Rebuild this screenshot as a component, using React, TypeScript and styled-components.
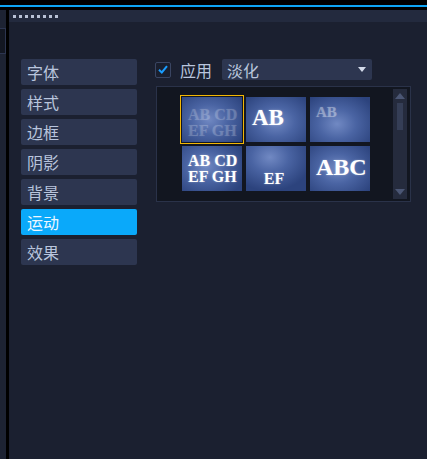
import React, { useState } from 'react'
import styled, { createGlobalStyle, css } from 'styled-components'

const GlobalStyle = createGlobalStyle`
    html, body {
        margin: 0;
        padding: 0;
        background: #000;
    }
    #root {
        width: 427px;
        height: 459px;
        overflow: hidden;
    }
`

const cjk = `"Noto Sans CJK SC", "Noto Sans", sans-serif`

const Window = styled.div`
    display: flex;
    flex-direction: column;
    width: 427px;
    height: 459px;
    background: #000;
`

const TopLine = styled.div`
    height: 2px;
    margin: 5px 0 3px;
    background: #0ea5f5;
`

const Body = styled.div`
    flex: 1;
    display: flex;
    gap: 3px;
    min-height: 0;
`

const SideStrip = styled.div`
    width: 6px;
    background: #1d2333;
    padding-top: 18px;
`

const SideBox = styled.div`
    height: 24px;
    background: #131722;
    border: 1px solid #2c3550;
    border-left: none;
`

const Main = styled.div`
    flex: 1;
    display: flex;
    flex-direction: column;
    background: #1b2030;
`

const Header = styled.div`
    height: 12px;
    display: flex;
    align-items: flex-start;
    gap: 3px;
    padding: 5px 0 0 4px;
    box-sizing: border-box;
    background: #232a3e;
`

const Dot = styled.span`
    width: 3px;
    height: 3px;
    background: #b9c2d6;
`

const Content = styled.div`
    display: flex;
    gap: 18px;
    padding: 37px 0 0 12px;
`

const Tabs = styled.div`
    display: flex;
    flex-direction: column;
    gap: 4px;
    width: 116px;
`

const Tab = styled.div<{ $active?: boolean }>`
    height: 26px;
    display: flex;
    align-items: center;
    padding-left: 6px;
    border-radius: 2px;
    font-family: ${cjk};
    font-size: 16px;
    color: #b9c5dd;
    background: #2d3650;
    cursor: pointer;
    ${p =>
        p.$active &&
        css`
            background: #0aa9fa;
            color: #eef7ff;
        `}
`

const Settings = styled.div`
    display: flex;
    flex-direction: column;
    gap: 6px;
`

const OptionRow = styled.div`
    display: flex;
    align-items: center;
    height: 21px;
`

const CheckBox = styled.div`
    width: 16px;
    height: 16px;
    box-sizing: border-box;
    border: 1px solid #3a4562;
    border-radius: 2px;
    background: #1a1f2e;
    display: flex;
    align-items: center;
    justify-content: center;
`

const Label = styled.span`
    margin: 0 10px 0 9px;
    font-family: ${cjk};
    font-size: 16px;
    color: #b9c5dd;
`

const Select = styled.div`
    width: 150px;
    height: 21px;
    display: flex;
    align-items: center;
    justify-content: space-between;
    padding: 0 6px 0 5px;
    box-sizing: border-box;
    border-radius: 2px;
    background: #2d3650;
    font-family: ${cjk};
    font-size: 16px;
    color: #b9c5dd;
`

const Arrow = styled.span`
    width: 0;
    height: 0;
    border-left: 4px solid transparent;
    border-right: 4px solid transparent;
    border-top: 5px solid #d3dbea;
`

const Gallery = styled.div`
    margin-left: 1px;
    width: 255px;
    height: 116px;
    box-sizing: border-box;
    display: flex;
    justify-content: space-between;
    padding: 2px 3px 2px 25px;
    border: 1px solid #2a3249;
    background: #121620;
`

const Grid = styled.div`
    display: grid;
    grid-template-columns: repeat(3, 60px);
    grid-auto-rows: 45px;
    gap: 4px;
    padding-top: 8px;
`

const Thumb = styled.div<{ $selected?: boolean; $light?: string }>`
    position: relative;
    overflow: hidden;
    box-sizing: border-box;
    background: radial-gradient(
        ellipse 70% 75% at ${p => p.$light ?? '45% 45%'},
        #7189c3 0%,
        #4a64a3 45%,
        #2c437d 100%
    );
    font-family: "Liberation Serif", "Times New Roman", serif;
    font-weight: bold;
    color: #fff;
    ${p =>
        p.$selected &&
        css`
            outline: 1px solid #f2b705;
            outline-offset: 1px;
        `}
`

const ThumbText = styled.div<{ $size: number; $fade?: number; $align?: string; $top: number; $left?: number }>`
    position: absolute;
    top: ${p => p.$top}px;
    left: ${p => (p.$left !== undefined ? `${p.$left}px` : '0')};
    right: ${p => (p.$left !== undefined ? 'auto' : '0')};
    text-align: ${p => p.$align ?? 'left'};
    font-size: ${p => p.$size}px;
    line-height: 16px;
    white-space: pre;
    opacity: ${p => p.$fade ?? 1};
    text-shadow: 0 0 2px rgba(255, 255, 255, 0.4);
`

const ScrollBar = styled.div`
    width: 14px;
    display: flex;
    flex-direction: column;
    align-items: center;
    justify-content: space-between;
    padding: 4px 0;
    box-sizing: border-box;
    background: #252b3d;
`

const ScrollArrow = styled.span<{ $down?: boolean }>`
    width: 0;
    height: 0;
    border-left: 5px solid transparent;
    border-right: 5px solid transparent;
    ${p =>
        p.$down
            ? css`border-top: 6px solid #4b5674;`
            : css`border-bottom: 6px solid #4b5674;`}
`

const ScrollThumb = styled.div`
    width: 6px;
    height: 27px;
    margin-top: 4px;
    background: #353e56;
`

const ScrollSpacer = styled.div`
    flex: 1;
    display: flex;
    flex-direction: column;
    align-items: center;
`

const tabs = ['字体', '样式', '边框', '阴影', '背景', '运动', '效果']

export default function App() {
    const [active, setActive] = useState(5)
    const [selected, setSelected] = useState(0)

    const thumbs = [
        <ThumbText $size={16} $fade={0.22} $top={10} $left={6}>{'AB CD\nEF GH'}</ThumbText>,
        <ThumbText $size={23} $top={9} $left={6} style={{ lineHeight: '24px' }}>AB</ThumbText>,
        <ThumbText $size={15} $fade={0.4} $top={7} $left={6}>AB</ThumbText>,
        <ThumbText $size={16} $top={7} $left={6}>{'AB CD\nEF GH'}</ThumbText>,
        <ThumbText $size={16} $top={25} $align="center" style={{ paddingRight: 4 }}>EF</ThumbText>,
        <ThumbText $size={24} $top={8} $left={6} style={{ lineHeight: '26px' }}>ABC</ThumbText>,
    ]
    const lights = ['45% 50%', '50% 55%', '45% 60%', '40% 45%', '40% 25%', '45% 50%']

    return (
        <>
            <GlobalStyle />
            <Window>
                <TopLine />
                <Body>
                    <SideStrip>
                        <SideBox />
                    </SideStrip>
                    <Main>
                        <Header>
                            {Array.from({ length: 8 }).map((_, i) => (
                                <Dot key={i} />
                            ))}
                        </Header>
                        <Content>
                            <Tabs>
                                {tabs.map((t, i) => (
                                    <Tab key={t} $active={i === active} onClick={() => setActive(i)}>
                                        {t}
                                    </Tab>
                                ))}
                            </Tabs>
                            <Settings>
                                <OptionRow>
                                    <CheckBox>
                                        <svg width="10" height="9" viewBox="0 0 10 9">
                                            <path d="M1 4.8 L3.8 7.5 L9 1.2" fill="none" stroke="#1a9dff" strokeWidth="2" />
                                        </svg>
                                    </CheckBox>
                                    <Label>应用</Label>
                                    <Select>
                                        淡化
                                        <Arrow />
                                    </Select>
                                </OptionRow>
                                <Gallery>
                                    <Grid>
                                        {thumbs.map((t, i) => (
                                            <Thumb
                                                key={i}
                                                $selected={i === selected}
                                                $light={lights[i]}
                                                onClick={() => setSelected(i)}
                                            >
                                                {t}
                                            </Thumb>
                                        ))}
                                    </Grid>
                                    <ScrollBar>
                                        <ScrollSpacer>
                                            <ScrollArrow />
                                            <ScrollThumb />
                                        </ScrollSpacer>
                                        <ScrollArrow $down />
                                    </ScrollBar>
                                </Gallery>
                            </Settings>
                        </Content>
                    </Main>
                </Body>
            </Window>
        </>
    )
}
